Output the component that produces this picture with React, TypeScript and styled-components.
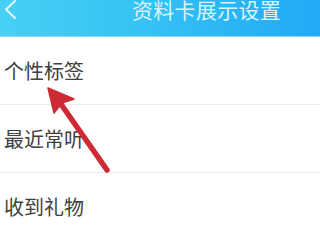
import styled, { createGlobalStyle } from 'styled-components';

const GlobalStyle = createGlobalStyle`
  html, body {
    margin: 0;
    padding: 0;
    background: #ffffff;
  }
  body {
    font-family: "Noto Sans CJK SC", "Noto Sans", sans-serif;
    overflow: hidden;
  }
`;

const Screen = styled.div`
  position: relative;
  width: 320px;
  height: 240px;
  overflow: hidden;
  background: #ffffff;
`;

const Header = styled.header`
  display: flex;
  align-items: flex-start;
  height: 36px;
  background: linear-gradient(90deg, #48d0f4 0%, #33c0f4 50%, #20aaf5 100%);
  border-bottom: 1px solid #8fdcf7;
`;

const BackButton = styled.div`
  display: flex;
  width: 20px;
  padding-left: 4px;
`;

const Title = styled.h1`
  margin: -3px 0 0 108px;
  font-size: 21px;
  line-height: 24px;
  font-weight: 400;
  color: #dcf3fc;
  letter-spacing: 0.3px;
  white-space: nowrap;
`;

const List = styled.ul`
  margin: 0;
  padding: 0;
  list-style: none;
`;

const Row = styled.li`
  display: flex;
  align-items: center;
  height: 67px;
  padding-left: 4px;
  border-bottom: 1px solid #ededed;
  font-size: 20px;
  color: #404040;
`;

const Pointer = styled.svg`
  position: absolute;
  left: 0;
  top: 0;
  pointer-events: none;
`;

const items = ['个性标签', '最近常听', '收到礼物'];

export default function App() {
  return (
    <>
      <GlobalStyle />
      <Screen>
        <Header>
          <BackButton>
            <svg width="14" height="20" viewBox="0 0 14 20">
              <path d="M11 1 L2 9.5 L11 18" fill="none" stroke="#e4f6fd" strokeWidth="2" strokeLinecap="round" strokeLinejoin="round" />
            </svg>
          </BackButton>
          <Title>资料卡展示设置</Title>
        </Header>
        <List>
          {items.map((label) => (
            <Row key={label}>{label}</Row>
          ))}
        </List>
        <Pointer width="320" height="240" viewBox="0 0 320 240">
          <line x1="107" y1="170" x2="56" y2="97" stroke="#cf2a33" strokeWidth="5.5" strokeLinecap="round" />
          <path d="M48 88 L74 99 L62 103 L54 113 Z" fill="#cf2a33" stroke="#cf2a33" strokeWidth="1.5" strokeLinejoin="round" />
        </Pointer>
      </Screen>
    </>
  );
}
